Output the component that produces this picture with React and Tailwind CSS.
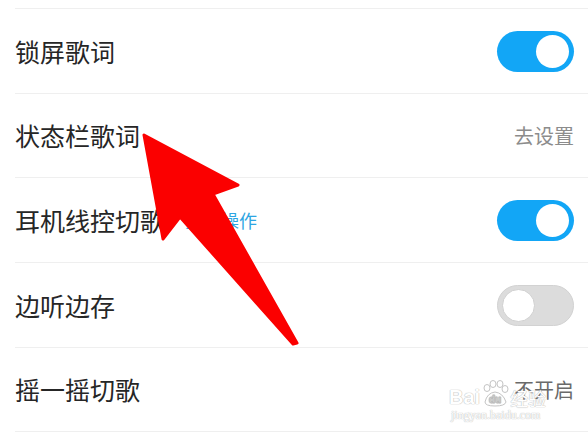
import React from "react";

const font = { fontFamily: '"Noto Sans CJK SC", "Noto Sans", sans-serif' };

function Toggle({ on }) {
  if (on) {
    return (
      <div className="w-[77px] h-[41px] rounded-full bg-[#12a6f6] flex items-center justify-end pr-[5px]">
        <div className="w-[33px] h-[33px] rounded-full bg-white" />
      </div>
    );
  }
  return (
    <div className="w-[77px] h-[41px] rounded-full bg-[#dcdcdc] border border-[#d2d2d2] flex items-center justify-start pl-[4px]">
      <div className="w-[33px] h-[33px] rounded-full bg-white border border-[#d0d0d0]" />
    </div>
  );
}

function Row({ h, label, right, extra }) {
  return (
    <div className={`ml-[15px] border-t border-[#efefef] flex items-center justify-between pr-[14px] ${h}`}>
      <div className="flex items-center">
        <span className="text-[25px] leading-none text-[#262626]">{label}</span>
        {extra}
      </div>
      {right}
    </div>
  );
}

export default function App() {
  return (
    <div className="relative w-[588px] h-[438px] bg-white overflow-hidden" style={font}>
      <div className="pt-[8px]">
        <Row h="h-[85px]" label="锁屏歌词" right={<Toggle on />} />
        <Row h="h-[84px]" label="状态栏歌词" right={<span className="text-[20px] leading-none text-[#8c8c8c]">去设置</span>} />
        <Row
          h="h-[85px]"
          label="耳机线控切歌"
          extra={<span className="ml-[20px] text-[18px] leading-none text-[#2da5e2]">查看操作</span>}
          right={<Toggle on />}
        />
        <Row h="h-[85px]" label="边听边存" right={<Toggle on={false} />} />
        <Row h="h-[84px]" label="摇一摇切歌" right={<span className="text-[20px] leading-none text-[#6a6a6a]">不开启</span>} />
        <div className="ml-[15px] border-t border-[#efefef] h-[7px]" />
      </div>

      {/* watermark */}
      <div className="absolute left-[449px] top-[380px] flex items-end text-white [text-shadow:0_0_1px_#b8b8b8,0_0_1px_#b8b8b8]">
        <span className="text-[20px] leading-none font-bold" style={{ fontFamily: '"Liberation Sans", sans-serif' }}>Bai</span>
        <svg width="28" height="27" viewBox="0 0 28 27" className="mx-[1px]">
          <g fill="white" stroke="#c4c4c4" strokeWidth="1">
            <ellipse cx="6" cy="8" rx="3" ry="3.5" />
            <ellipse cx="12" cy="4" rx="3" ry="3.5" />
            <ellipse cx="19" cy="4" rx="3" ry="3.5" />
            <ellipse cx="24" cy="9" rx="3" ry="3.5" />
            <path d="M4 22 Q6 13 14 12 Q22 13 25 22 Q24 26 14 26 Q4 26 4 22 Z" />
          </g>
          <text x="14" y="23" textAnchor="middle" fontSize="10" fill="white" stroke="#bbb" strokeWidth="0.5" fontFamily="Liberation Sans, sans-serif" fontWeight="bold">du</text>
        </svg>
        <span className="text-[18px] leading-none">经验</span>
      </div>
      <div className="absolute left-[451px] top-[409px] text-[12px] leading-none text-white [text-shadow:0_0_1px_#bdbdbd,0_0_1px_#bdbdbd]" style={{ fontFamily: '"Liberation Serif", serif' }}>
        jingyan.baidu.com
      </div>

      {/* red arrow */}
      <svg className="absolute left-0 top-0 pointer-events-none" width="588" height="438" viewBox="0 0 588 438">
        <path
          d="M144 135 L238 185 L213 194 L297 343 L293 344 L180 217 L163 239 Z"
          fill="#fb0000"
          stroke="#fb0000"
          strokeWidth="3"
          strokeLinejoin="round"
        />
      </svg>
    </div>
  );
}
